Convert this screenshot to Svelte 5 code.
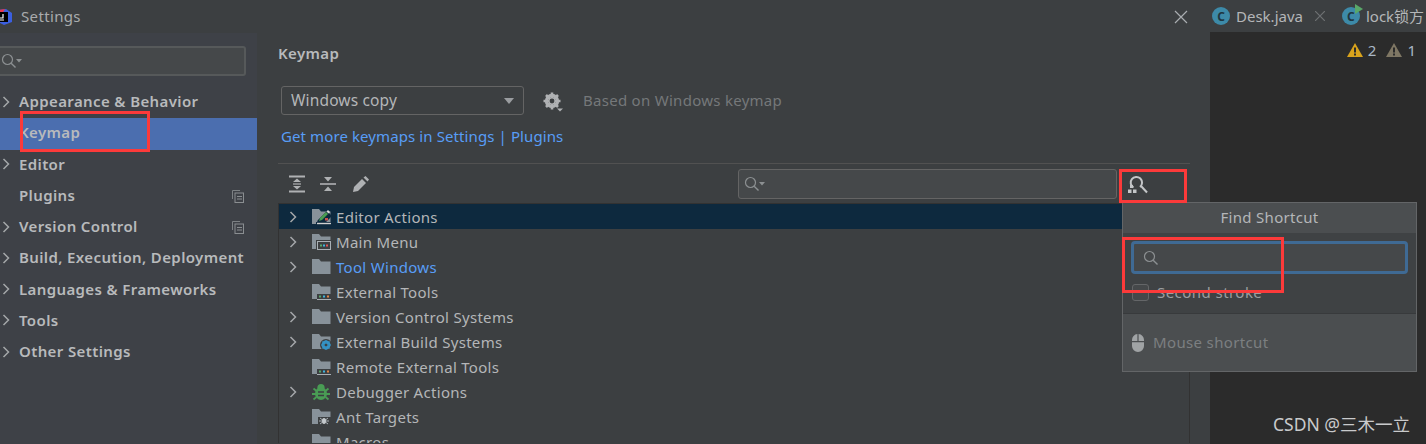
<script>
  const nav = [
    { label: 'Appearance & Behavior', arrow: true },
    { label: 'Keymap', selected: true },
    { label: 'Editor', arrow: true },
    { label: 'Plugins', badge: true },
    { label: 'Version Control', arrow: true, badge: true },
    { label: 'Build, Execution, Deployment', arrow: true },
    { label: 'Languages & Frameworks', arrow: true },
    { label: 'Tools', arrow: true },
    { label: 'Other Settings', arrow: true }
  ];
  const tree = [
    { label: 'Editor Actions', arrow: true, icon: 'edit', selected: true },
    { label: 'Main Menu', arrow: true, icon: 'menu' },
    { label: 'Tool Windows', arrow: true, icon: 'plain', link: true },
    { label: 'External Tools', icon: 'tools' },
    { label: 'Version Control Systems', arrow: true, icon: 'plain' },
    { label: 'External Build Systems', arrow: true, icon: 'gear' },
    { label: 'Remote External Tools', icon: 'tools' },
    { label: 'Debugger Actions', arrow: true, icon: 'bug' },
    { label: 'Ant Targets', icon: 'ant' },
    { label: 'Macros', icon: 'plain' }
  ];
</script>

{#snippet chevron()}
  <svg class="chev" width="8" height="12" viewBox="0 0 8 12"><path d="M1.5 1l5 5-5 5" fill="none" stroke="#a4a7a9" stroke-width="1.5"/></svg>
{/snippet}

{#snippet search()}
  <svg width="16" height="16" viewBox="0 0 16 16"><circle cx="6.5" cy="6.5" r="5" fill="none" stroke="#8c9092" stroke-width="1.2"/><path d="M10.2 10.2l4.3 4.3" stroke="#8c9092" stroke-width="1.4"/></svg>
{/snippet}

{#snippet searchDrop()}
  <svg width="22" height="16" viewBox="0 0 22 16"><circle cx="6.5" cy="6.5" r="5" fill="none" stroke="#8c9092" stroke-width="1.2"/><path d="M10.2 10.2l4.3 4.3" stroke="#8c9092" stroke-width="1.4"/><path d="M15 6h6l-3 3.5z" fill="#8c9092"/></svg>
{/snippet}

{#snippet folder(kind, bg)}
  {#if kind === 'bug'}
    <svg width="18" height="18" viewBox="0 0 18 18">
      <ellipse cx="9" cy="10.5" rx="6" ry="6.5" fill="#499c54"/>
      <circle cx="9" cy="4.5" r="3.6" fill="#499c54"/>
      <path d="M1.5 5.5l3 2.5M16.5 5.5l-3 2.5M0 11h4M18 11h-4M1.5 16.5l3-2.5M16.5 16.5l-3-2.5" stroke="#499c54" stroke-width="1.8"/>
      <path d="M6 9h6M6 12.5h6" stroke="#3c3f41" stroke-width="1.5"/>
    </svg>
  {:else}
    <svg width="19" height="17" viewBox="0 0 19 17">
      <path d="M0 1h7l2 2.5h9.500V16H0z" fill="#88929a"/>
      {#if kind === 'edit'}
        <path d="M6 16l1-3 8-8 3 3-8 8z" fill={bg} stroke={bg} stroke-width="3"/>
        <rect x="4" y="14" width="15" height="3" fill={bg}/>
        <path d="M7 13l1-3 6-6 2 2-6 6z" fill="#4a9c50"/>
        <path d="M14.500 3.500l1.500-1.500 2 2-1.500 1.500z" fill="#d8d8d8"/>
        <path d="M13 10h3v2.500h-3z" fill="#c75450"/>
        <path d="M5 15.500h14" stroke="#d0d0d0" stroke-width="1.4"/>
      {:else if kind === 'menu'}
        <rect x="4" y="7" width="15" height="10" fill={bg}/>
        <rect x="5.500" y="8.500" width="13" height="8" fill="none" stroke="#a9b0b5"/>
        <rect x="8" y="11.500" width="2" height="2" fill="#59a869"/>
        <rect x="11" y="11.500" width="2" height="2" fill="#40b6e0"/>
        <rect x="14" y="11.500" width="2" height="2" fill="#e05555"/>
      {:else if kind === 'tools'}
        <rect x="5" y="11" width="14" height="6" fill={bg}/>
        <path d="M5 16.500h14" stroke="#a9b0b5"/>
        <rect x="7" y="12.500" width="2" height="2" fill="#59a869"/>
        <rect x="11" y="12.500" width="2" height="2" fill="#40b6e0"/>
        <rect x="15" y="12.500" width="2" height="2" fill="#e0884b"/>
      {:else if kind === 'gear'}
        <circle cx="14" cy="12" r="6" fill={bg}/>
        <circle cx="14" cy="12" r="3.400" fill="none" stroke="#3592c4" stroke-width="2.200"/>
        <path d="M14 7v10M9 12h10M10.500 8.500l7 7M17.500 8.500l-7 7" stroke="#3592c4" stroke-width="1.200"/>
        <circle cx="14" cy="12" r="1.300" fill={bg}/>
      {:else if kind === 'ant'}
        <rect x="6" y="9" width="13" height="8" fill={bg}/>
        <path d="M8 10l8 6M16 10l-8 6M7 13h10" stroke="#a9b0b5" stroke-width="1"/>
        <ellipse cx="12" cy="13" rx="2" ry="3" fill="#c4c9cc"/>
      {/if}
    </svg>
  {/if}
{/snippet}

<div class="screen">
  <section class="dialog">
    <header class="titlebar">
      <svg class="logo" width="14" height="16" viewBox="0 0 14 16">
        <path d="M0 1l8-1 6 4v9l-8 3-6-3z" fill="#3b5fe0"/>
        <path d="M0 1l7-1-3 5-4 0z" fill="#e8364f"/>
        <rect x="0" y="3" width="10" height="10" fill="#000"/>
        <path d="M5 5v4H2" fill="none" stroke="#fff" stroke-width="1.2"/>
        <path d="M1 11h5" stroke="#fff"/>
      </svg>
      <span class="title">Settings</span>
      <svg class="close" width="14" height="14" viewBox="0 0 14 14"><path d="M1 1l12 12M13 1L1 13" stroke="#a9adb0" stroke-width="1.2"/></svg>
    </header>
    <div class="body">
      <aside class="sidebar">
        <div class="side-search">{@render searchDrop()}</div>
        <ul class="nav">
          {#each nav as item}
            <li class="nav-row" class:selected={item.selected}>
              <span class="nav-arrow">{#if item.arrow}{@render chevron()}{/if}</span>
              <span class="nav-label">{item.label}</span>
              {#if item.badge}
                <svg class="copy" width="12" height="13" viewBox="0 0 12 13"><path d="M.5 9V.5H8" fill="none" stroke="#7d8184"/><rect x="3" y="3" width="8.500" height="9.500" fill="none" stroke="#8a8e91"/><path d="M5 6.500h5M5 9h5" stroke="#8a8e91"/></svg>
              {/if}
            </li>
          {/each}
        </ul>
      </aside>
      <main class="content">
        <h1>Keymap</h1>
        <div class="combo-row">
          <div class="combo">
            <span>Windows copy</span>
            <i class="caret"></i>
          </div>
          <svg class="gear" width="22" height="20" viewBox="0 0 22 20">
            <circle cx="9" cy="9" r="5.500" fill="none" stroke="#afb1b3" stroke-width="3.400"/>
            <path d="M9 .5v17M.5 9h17M3 3l12 12M15 3L3 15" stroke="#afb1b3" stroke-width="2.600"/>
            <circle cx="9" cy="9" r="2.400" fill="#3c3f41"/>
            <path d="M14 16.500h6l-3 3z" fill="#afb1b3"/>
          </svg>
          <span class="based">Based on Windows keymap</span>
        </div>
        <p class="link">Get more keymaps in Settings | Plugins</p>
        <div class="toolbar">
          <div class="tools">
            <svg width="16" height="18" viewBox="0 0 16 18"><path d="M0 1.500h16M0 16.500h16" stroke="#afb1b3" stroke-width="2"/><path d="M8 3.500l4 3.500H4zM8 14.500l4-3.500H4z" fill="#afb1b3"/><path d="M4 9h8" stroke="#afb1b3" stroke-width="1.200"/></svg>
            <svg width="16" height="18" viewBox="0 0 16 18"><path d="M0 9h16" stroke="#afb1b3" stroke-width="1.600"/><path d="M4 2h8L8 6.500zM4 16h8L8 11.500z" fill="#afb1b3"/></svg>
            <svg width="18" height="18" viewBox="0 0 18 18"><path d="M1 17l1-5 8-8 4 4-8 8z" fill="#afb1b3"/><path d="M11.500 2.500l2-1.500 3.500 3.500-1.500 2z" fill="#afb1b3"/></svg>
          </div>
          <div class="tree-search">{@render searchDrop()}</div>
          <svg class="find" width="22" height="20" viewBox="0 0 22 20">
            <path d="M6.500 12.500A5.700 5.700 0 1 1 13 12" fill="none" stroke="#c4c6c8" stroke-width="2"/>
            <path d="M14 11l6 6.500" stroke="#c4c6c8" stroke-width="2"/>
            <rect x="1" y="14.500" width="3.500" height="3.500" fill="#c4c6c8"/>
            <rect x="6" y="14.500" width="3.500" height="3.500" fill="#c4c6c8"/>
            <rect x="3" y="10" width="3" height="3" fill="#c4c6c8"/>
          </svg>
        </div>
        <ul class="tree">
          {#each tree as row}
            <li class="tree-row" class:selected={row.selected}>
              <span class="tree-arrow">{#if row.arrow}{@render chevron()}{/if}</span>
              <span class="tree-icon">{@render folder(row.icon, row.selected ? '#0d293e' : '#3c3f41')}</span>
              <span class:link-text={row.link}>{row.label}</span>
            </li>
          {/each}
        </ul>
      </main>
    </div>
  </section>

  <section class="editor">
    <div class="tabs">
      <span class="tab-icon">C</span>
      <span class="tab-name">Desk.java</span>
      <svg class="tab-x" width="10" height="10" viewBox="0 0 10 10"><path d="M0 0l10 10M10 0L0 10" stroke="#6e7173" stroke-width="1.200"/></svg>
      <span class="tab-icon run">C<i></i></span>
      <span class="tab-name">lock锁方</span>
    </div>
    <div class="inspect">
      <svg width="16" height="14" viewBox="0 0 16 14"><path d="M8 0l8 14H0z" fill="#d9a31c"/><path d="M8 4.500v5M8 10.500v2" stroke="#2b2b2b" stroke-width="2"/></svg>
      <span>2</span>
      <svg width="16" height="14" viewBox="0 0 16 14"><path d="M8 0l8 14H0z" fill="#7f7764"/><path d="M8 4.500v5M8 10.500v2" stroke="#2b2b2b" stroke-width="2"/></svg>
      <span>1</span>
      <svg width="8" height="10" viewBox="0 0 8 10"><path d="M1 5l3 3 4-7" fill="none" stroke="#499c54" stroke-width="2"/></svg>
    </div>
  </section>

  <div class="popup">
    <div class="pop-head">Find Shortcut</div>
    <div class="pop-mid">
      <div class="pop-input">{@render search()}</div>
      <label class="pop-check"><i></i><span>Second stroke</span></label>
    </div>
    <div class="pop-foot">
      <svg width="12" height="18" viewBox="0 0 12 18"><path d="M5.400 0v7H0V6a6 6 0 0 1 5.400-6zM6.600 0a6 6 0 0 1 5.400 6v1H6.600zM0 8.200h12V12a6 6 0 0 1-12 0z" fill="#a0a3a5"/></svg>
      <span>Mouse shortcut</span>
    </div>
  </div>

  <div class="mark m1"></div>
  <div class="mark m2"></div>
  <div class="mark m3"></div>
  <div class="watermark">CSDN @三木一立</div>
</div>

<style>
  :global(body) { margin: 0; background: #2b2b2b; }
  * { box-sizing: border-box; }
  ul { list-style: none; margin: 0; padding: 0; }
  .screen {
    position: relative; display: flex; width: 1426px; height: 444px; overflow: hidden;
    font-family: "Noto Sans", "Noto Sans CJK SC", sans-serif; font-size: 15px; color: #bbbbbb;
  }
  .dialog { width: 1210px; height: 444px; background: #3c3f41; display: flex; flex-direction: column; flex: none; }
  .titlebar { height: 33px; flex: none; display: flex; align-items: center; position: relative; }
  .logo { margin-left: -2px; flex: none; }
  .title { margin-left: 9px; color: #a9abad; letter-spacing: .35px; padding-bottom: 2px; }
  .close { margin-left: auto; margin-right: 22px; }
  .body { flex: 1; display: flex; min-height: 0; }
  .sidebar { width: 257px; flex: none; background: #3e4147; padding-top: 13px; }
  .side-search {
    width: 250px; height: 30px; margin-left: -4px; border: 2px solid #56595a; border-radius: 3px;
    background: #45484a; display: flex; align-items: center; padding-left: 3px;
  }
  .nav { margin-top: 11px; }
  .nav-row { height: 31.25px; display: flex; align-items: center; font-weight: 600; color: #b8babc; position: relative; letter-spacing: .38px; }
  .nav-label { padding-bottom: 3px; }
  .nav-row.selected { background: #4b6eaf; }
  .nav-arrow { width: 19px; flex: none; display: flex; padding-left: 2px; padding-bottom: 2px; }
  .copy { margin-left: auto; margin-right: 13px; }
  .content { flex: 1; padding-left: 21px; padding-right: 20px; min-width: 0; }
  h1 { margin: 0; font-size: 15px; font-weight: 600; line-height: 20px; padding-top: 10px; height: 31px; color: #b8babc; letter-spacing: .38px; }
  .combo-row { display: flex; align-items: center; margin-top: 22px; padding-left: 3px; height: 29px; }
  .combo {
    width: 243px; height: 29px; border: 1px solid #646464; border-radius: 3px; display: flex;
    align-items: center; justify-content: space-between; padding: 0 9px 2px 9px; color: #b4b6b8;
    font-size: 15.5px; letter-spacing: .15px;
  }
  .caret { width: 0; height: 0; border-left: 5.5px solid transparent; border-right: 5.5px solid transparent; border-top: 6px solid #9a9da0; margin-top: 2px; }
  .gear { margin-left: 19px; margin-top: 2px; }
  .based { margin-left: 18px; color: #75787a; letter-spacing: .28px; padding-bottom: 2px; }
  .link { margin: 9px 0 0 3px; height: 24px; line-height: 24px; color: #589df6; letter-spacing: .1px; }
  .toolbar {
    margin-top: 15px; height: 40px; border-top: 1px solid #515151; display: flex; align-items: center; position: relative;
  }
  .tools { display: flex; gap: 15px; padding-left: 11px; align-items: center; }
  .tools svg:last-child { margin-left: 1px; }
  .tree-search {
    margin-left: auto; width: 379px; height: 30px; border: 1px solid #646464; border-radius: 3px; background: #45484a;
    display: flex; align-items: center; padding-left: 5px;
  }
  .find { margin-left: 10px; margin-right: 41px; flex: none; margin-top: 2px; }
  .tree { border-left: 1px solid #323232; border-right: 1px solid #323232; border-top: 1px solid #323232; margin-left: 0; height: 240px; overflow: hidden; }
  .tree-row { height: 25px; display: flex; align-items: center; white-space: nowrap; color: #b4b6b8; letter-spacing: .3px; }
  .tree-row.selected { background: #0d293e; }
  .tree-arrow { width: 33px; flex: none; display: flex; padding-left: 10px; }
  .tree-icon { width: 24px; flex: none; display: flex; align-items: center; }
  .link-text { color: #589df6; }
  .editor { flex: 1; display: flex; flex-direction: column; min-width: 0; }
  .tabs { height: 32px; background: #3c3f41; display: flex; align-items: center; padding-left: 2px; white-space: nowrap; overflow: hidden; }
  .tab-icon {
    position: relative; width: 18px; height: 18px; border-radius: 50%; background: #3d8aa8; color: #1f3640; font-size: 12px; font-weight: 700;
    display: inline-flex; align-items: center; justify-content: center; flex: none;
  }
  .tab-icon.run i { position: absolute; top: -3px; right: -3px; width: 0; height: 0; border-left: 8px solid #59a869; border-top: 5px solid transparent; border-bottom: 5px solid transparent; }
  .tab-name { margin-left: 6px; color: #b4b6b8; padding-bottom: 1px; }
  .tab-x { margin: 0 17px 0 12px; flex: none; }
  .inspect { height: 36px; margin-right: -8px; display: flex; align-items: center; justify-content: flex-end; gap: 5px; font-size: 15px; color: #a9b7c6; white-space: nowrap; }
  .inspect span { margin-right: 5px; }
  .popup {
    position: absolute; left: 1122px; top: 202px; width: 295px; height: 170px; background: #4b4e50;
    border: 1px solid #636567; display: flex; flex-direction: column;
  }
  .pop-head { height: 30px; display: flex; align-items: center; justify-content: center; color: #b4b6b8; letter-spacing: .3px; padding-bottom: 2px; }
  .pop-mid { height: 81px; background: #3f4244; padding: 8px 8px 0 8px; border-bottom: 1px solid #383a3c; }
  .pop-input {
    height: 33px; border: 3px solid #3f6a94; border-radius: 4px; background: #45484a; display: flex; align-items: center; padding-left: 9px;
  }
  .pop-check { display: flex; align-items: center; margin-top: 9px; margin-left: 1px; height: 18px; color: #9c9ea0; letter-spacing: .45px; }
  .pop-check i { width: 17px; height: 17px; border: 1px solid #646668; border-radius: 3px; background: #45484a; flex: none; }
  .pop-check span { margin-left: 8px; }
  .pop-foot { flex: 1; display: flex; align-items: center; padding-left: 9px; color: #7c7f81; letter-spacing: .35px; }
  .pop-foot span { margin-left: 9px; padding-bottom: 2px; }
  .mark { position: absolute; border: 3px solid #fc3a3a; }
  .m1 { left: 20px; top: 111px; width: 130px; height: 41px; }
  .m2 { left: 1119px; top: 169px; width: 68px; height: 34px; }
  .m3 { left: 1122px; top: 237px; width: 162px; height: 56px; }
  .watermark { position: absolute; left: 1273px; top: 411px; color: #c9cacb; font-size: 17.5px; white-space: nowrap; }
</style>
